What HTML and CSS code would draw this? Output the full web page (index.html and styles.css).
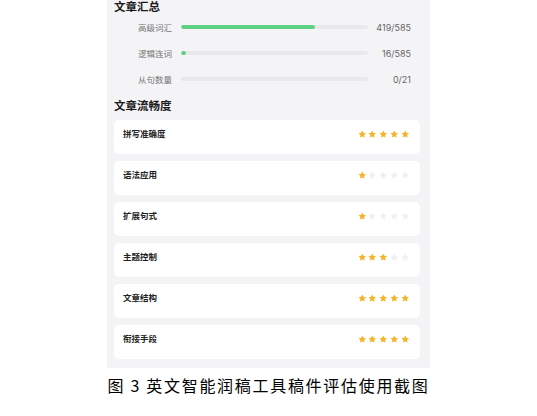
FILE: index.html
```html
<!DOCTYPE html>
<html lang="zh-CN">
<head>
    <meta charset="UTF-8">
    <meta name="viewport" content="width=device-width, initial-scale=1.0">
    <title>稿件评估</title>
    <link rel="stylesheet" href="styles.css">
</head>
<body>

    <div class="panel">
        <!-- 文章汇总 -->
        <h2 class="section-title">文章汇总</h2>
        <div class="stat-list">
            <div class="stat-row">
                <span class="stat-label">高级词汇</span>
                <div class="track"><div class="fill" style="width: 71.6%"></div></div>
                <span class="stat-value">419/585</span>
            </div>
            <div class="stat-row">
                <span class="stat-label">逻辑连词</span>
                <div class="track"><div class="fill" style="width: 2.7%"></div></div>
                <span class="stat-value">16/585</span>
            </div>
            <div class="stat-row">
                <span class="stat-label">从句数量</span>
                <div class="track"></div>
                <span class="stat-value">0/21</span>
            </div>
        </div>

        <!-- 文章流畅度 -->
        <h2 class="section-title second">文章流畅度</h2>
        <div class="card-list" id="cardList"></div>
    </div>

    <p class="caption">图 3 英文智能润稿工具稿件评估使用截图</p>

    <script>
        const items = [
            ['拼写准确度', 5],
            ['语法应用', 1],
            ['扩展句式', 1],
            ['主题控制', 3],
            ['文章结构', 5],
            ['衔接手段', 5]
        ];

        const starPath = 'M12 1.5l3.2 6.6 7.3 1-5.3 5.1 1.3 7.2L12 18l-6.5 3.4 1.3-7.2L1.5 9.1l7.3-1z';
        const cardList = document.getElementById('cardList');

        items.forEach(function(item) {
            let stars = '';
            for (let i = 0; i < 5; i++) {
                const cls = i < item[1] ? 'star on' : 'star';
                stars += '<svg class="' + cls + '" viewBox="0 0 24 24"><path d="' + starPath + '"/></svg>';
            }
            const card = document.createElement('div');
            card.className = 'card';
            card.innerHTML = '<span class="card-label">' + item[0] + '</span><span class="stars">' + stars + '</span>';
            cardList.appendChild(card);
        });
    </script>

</body>
</html>
```

FILE: styles.css
```css
body {
    margin: 0;
    background-color: #ffffff;
    font-family: "Inter", "Noto Sans CJK SC", sans-serif;
}

.panel {
    width: 323px;
    margin-left: 107px;
    padding: 0 10px 9px 7px;
    box-sizing: border-box;
    background-color: #f4f4f6;
}

.section-title {
    margin: 0;
    padding-top: 1px;
    font-size: 11.5px;
    line-height: 13px;
    font-weight: 700;
    color: #1a1a1a;
}

.section-title.second {
    margin-top: 7px;
    padding-top: 0;
    line-height: 14px;
}

/* 统计条 */
.stat-list {
    display: flex;
    flex-direction: column;
}

.stat-row {
    display: flex;
    align-items: center;
    height: 26px;
}

.stat-label {
    width: 58px;
    text-align: right;
    font-size: 8.5px;
    color: #777;
}

.track {
    width: 187px;
    height: 4px;
    margin-left: 9px;
    border-radius: 2px;
    background-color: #e9e9ec;
    overflow: hidden;
}

.fill {
    height: 100%;
    min-width: 5px;
    border-radius: 2px;
    background-color: #5dd084;
}

.stat-value {
    width: 43px;
    text-align: right;
    font-size: 9px;
    color: #666;
}

/* 流畅度卡片 */
.card-list {
    display: flex;
    flex-direction: column;
    gap: 7px;
    margin-top: 7px;
}

.card {
    display: flex;
    justify-content: space-between;
    align-items: flex-start;
    height: 34px;
    padding: 8px 10px 0 9px;
    box-sizing: border-box;
    background-color: #ffffff;
    border-radius: 5px;
}

.card-label {
    font-size: 8.5px;
    line-height: 12px;
    font-weight: 600;
    color: #222;
}

.stars {
    display: flex;
    gap: 2.2px;
    padding-top: 1.5px;
    margin-right: 1px;
}

.star {
    width: 8.5px;
    height: 8.5px;
    fill: #edf0f5;
}

.star.on {
    fill: #f6b42a;
}

.caption {
    width: 323px;
    margin: 7px 0 0 107px;
    text-align: center;
    white-space: nowrap;
    font-family: "Noto Sans CJK SC", sans-serif;
    font-size: 16px;
    font-weight: 400;
    line-height: 20px;
    letter-spacing: 1.7px;
    color: #000;
}
```
